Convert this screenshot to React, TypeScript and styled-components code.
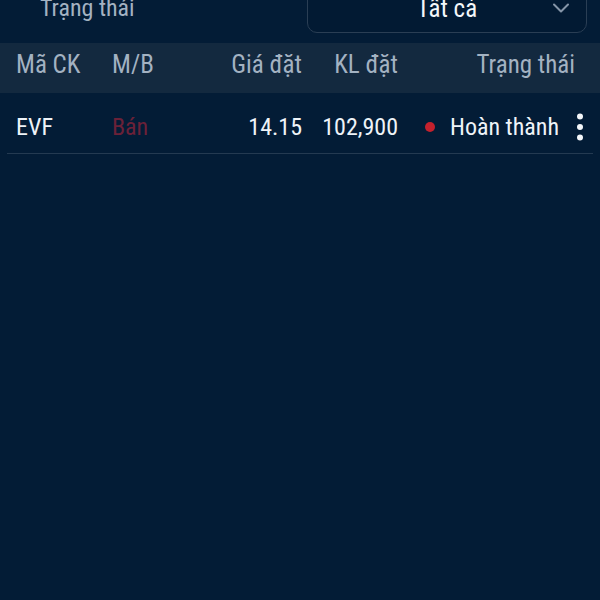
import React from "react";
import styled, { createGlobalStyle } from "styled-components";

const GlobalStyle = createGlobalStyle`
  html, body {
    margin: 0;
    background: #031c36;
  }
  body {
    font-family: Roboto, "Noto Sans", sans-serif;
    font-stretch: 75%;
    color: #eef3f8;
  }
`;

const Screen = styled.div`
  width: 600px;
  height: 600px;
  overflow: hidden;
  background: #031c36;
`;

const FilterBar = styled.div`
  height: 43px;
  display: flex;
  align-items: flex-end;
  justify-content: space-between;
  padding: 0 13px 10px 40px;
  box-sizing: border-box;
`;

const FilterLabel = styled.div`
  height: 50px;
  line-height: 50px;
  font-size: 24px;
  color: #a3b2c2;
`;

const Select = styled.div`
  position: relative;
  width: 280px;
  height: 50px;
  box-sizing: border-box;
  border: 1px solid #2a3e54;
  border-radius: 10px;
  display: flex;
  align-items: center;
  justify-content: center;
  font-size: 25px;
  color: #f4f7fa;
  background: #021a33;
`;

const Chevron = styled.svg`
  position: absolute;
  right: 16px;
  top: 50%;
  margin-top: -5px;
`;

const Grid = styled.div`
  display: grid;
  grid-template-columns: 96px 80px 110px 96px 1fr 24px;
  align-items: center;
`;

const HeaderRow = styled(Grid)`
  height: 50px;
  padding: 5px 8px 0 16px;
  box-sizing: border-box;
  align-items: start;
  background: #13293f;
  color: #a3b2c2;
  font-size: 25px;
  line-height: 34px;
`;

const DataRow = styled(Grid)`
  margin: 0 7px;
  padding: 17px 1px 9px 9px;
  border-bottom: 1px solid #243a51;
  font-size: 24px;
  line-height: 34px;
`;

const Cell = styled.div<{ $align?: "left" | "right"; $tone?: "sell" }>`
  text-align: ${(p) => p.$align || "left"};
  color: ${(p) => (p.$tone === "sell" ? "#6b2138" : "inherit")};
  white-space: nowrap;
`;

const StatusHead = styled.div`
  grid-column: 5 / 7;
  text-align: right;
  padding-right: 17px;
`;

const StatusCell = styled.div`
  display: flex;
  align-items: center;
  justify-content: flex-end;
  gap: 15px;
  padding-right: 9px;
  white-space: nowrap;
`;

const Dot = styled.span`
  width: 10px;
  height: 10px;
  border-radius: 50%;
  background: #c4212d;
`;

const MoreButton = styled.div`
  display: flex;
  justify-content: center;
  align-items: center;
  color: #f4f7fa;
`;

export default function App() {
  return (
    <>
      <GlobalStyle />
      <Screen>
        <FilterBar>
          <FilterLabel>Trạng thái</FilterLabel>
          <Select>
            Tất cả
            <Chevron width="18" height="10" viewBox="0 0 18 10">
              <path d="M2 1.5 9 8.5 16 1.5" fill="none" stroke="#8595a8" strokeWidth="2" strokeLinecap="round" strokeLinejoin="round" />
            </Chevron>
          </Select>
        </FilterBar>
        <HeaderRow>
          <Cell>Mã CK</Cell>
          <Cell>M/B</Cell>
          <Cell $align="right">Giá đặt</Cell>
          <Cell $align="right">KL đặt</Cell>
          <StatusHead>Trạng thái</StatusHead>
        </HeaderRow>
        <DataRow>
          <Cell>EVF</Cell>
          <Cell $tone="sell">Bán</Cell>
          <Cell $align="right">14.15</Cell>
          <Cell $align="right">102,900</Cell>
          <StatusCell>
            <Dot />
            Hoàn thành
          </StatusCell>
          <MoreButton>
            <svg width="8" height="28" viewBox="0 0 8 28">
              <circle cx="4" cy="3.5" r="3" fill="currentColor" />
              <circle cx="4" cy="14" r="3" fill="currentColor" />
              <circle cx="4" cy="24.5" r="3" fill="currentColor" />
            </svg>
          </MoreButton>
        </DataRow>
      </Screen>
    </>
  );
}
